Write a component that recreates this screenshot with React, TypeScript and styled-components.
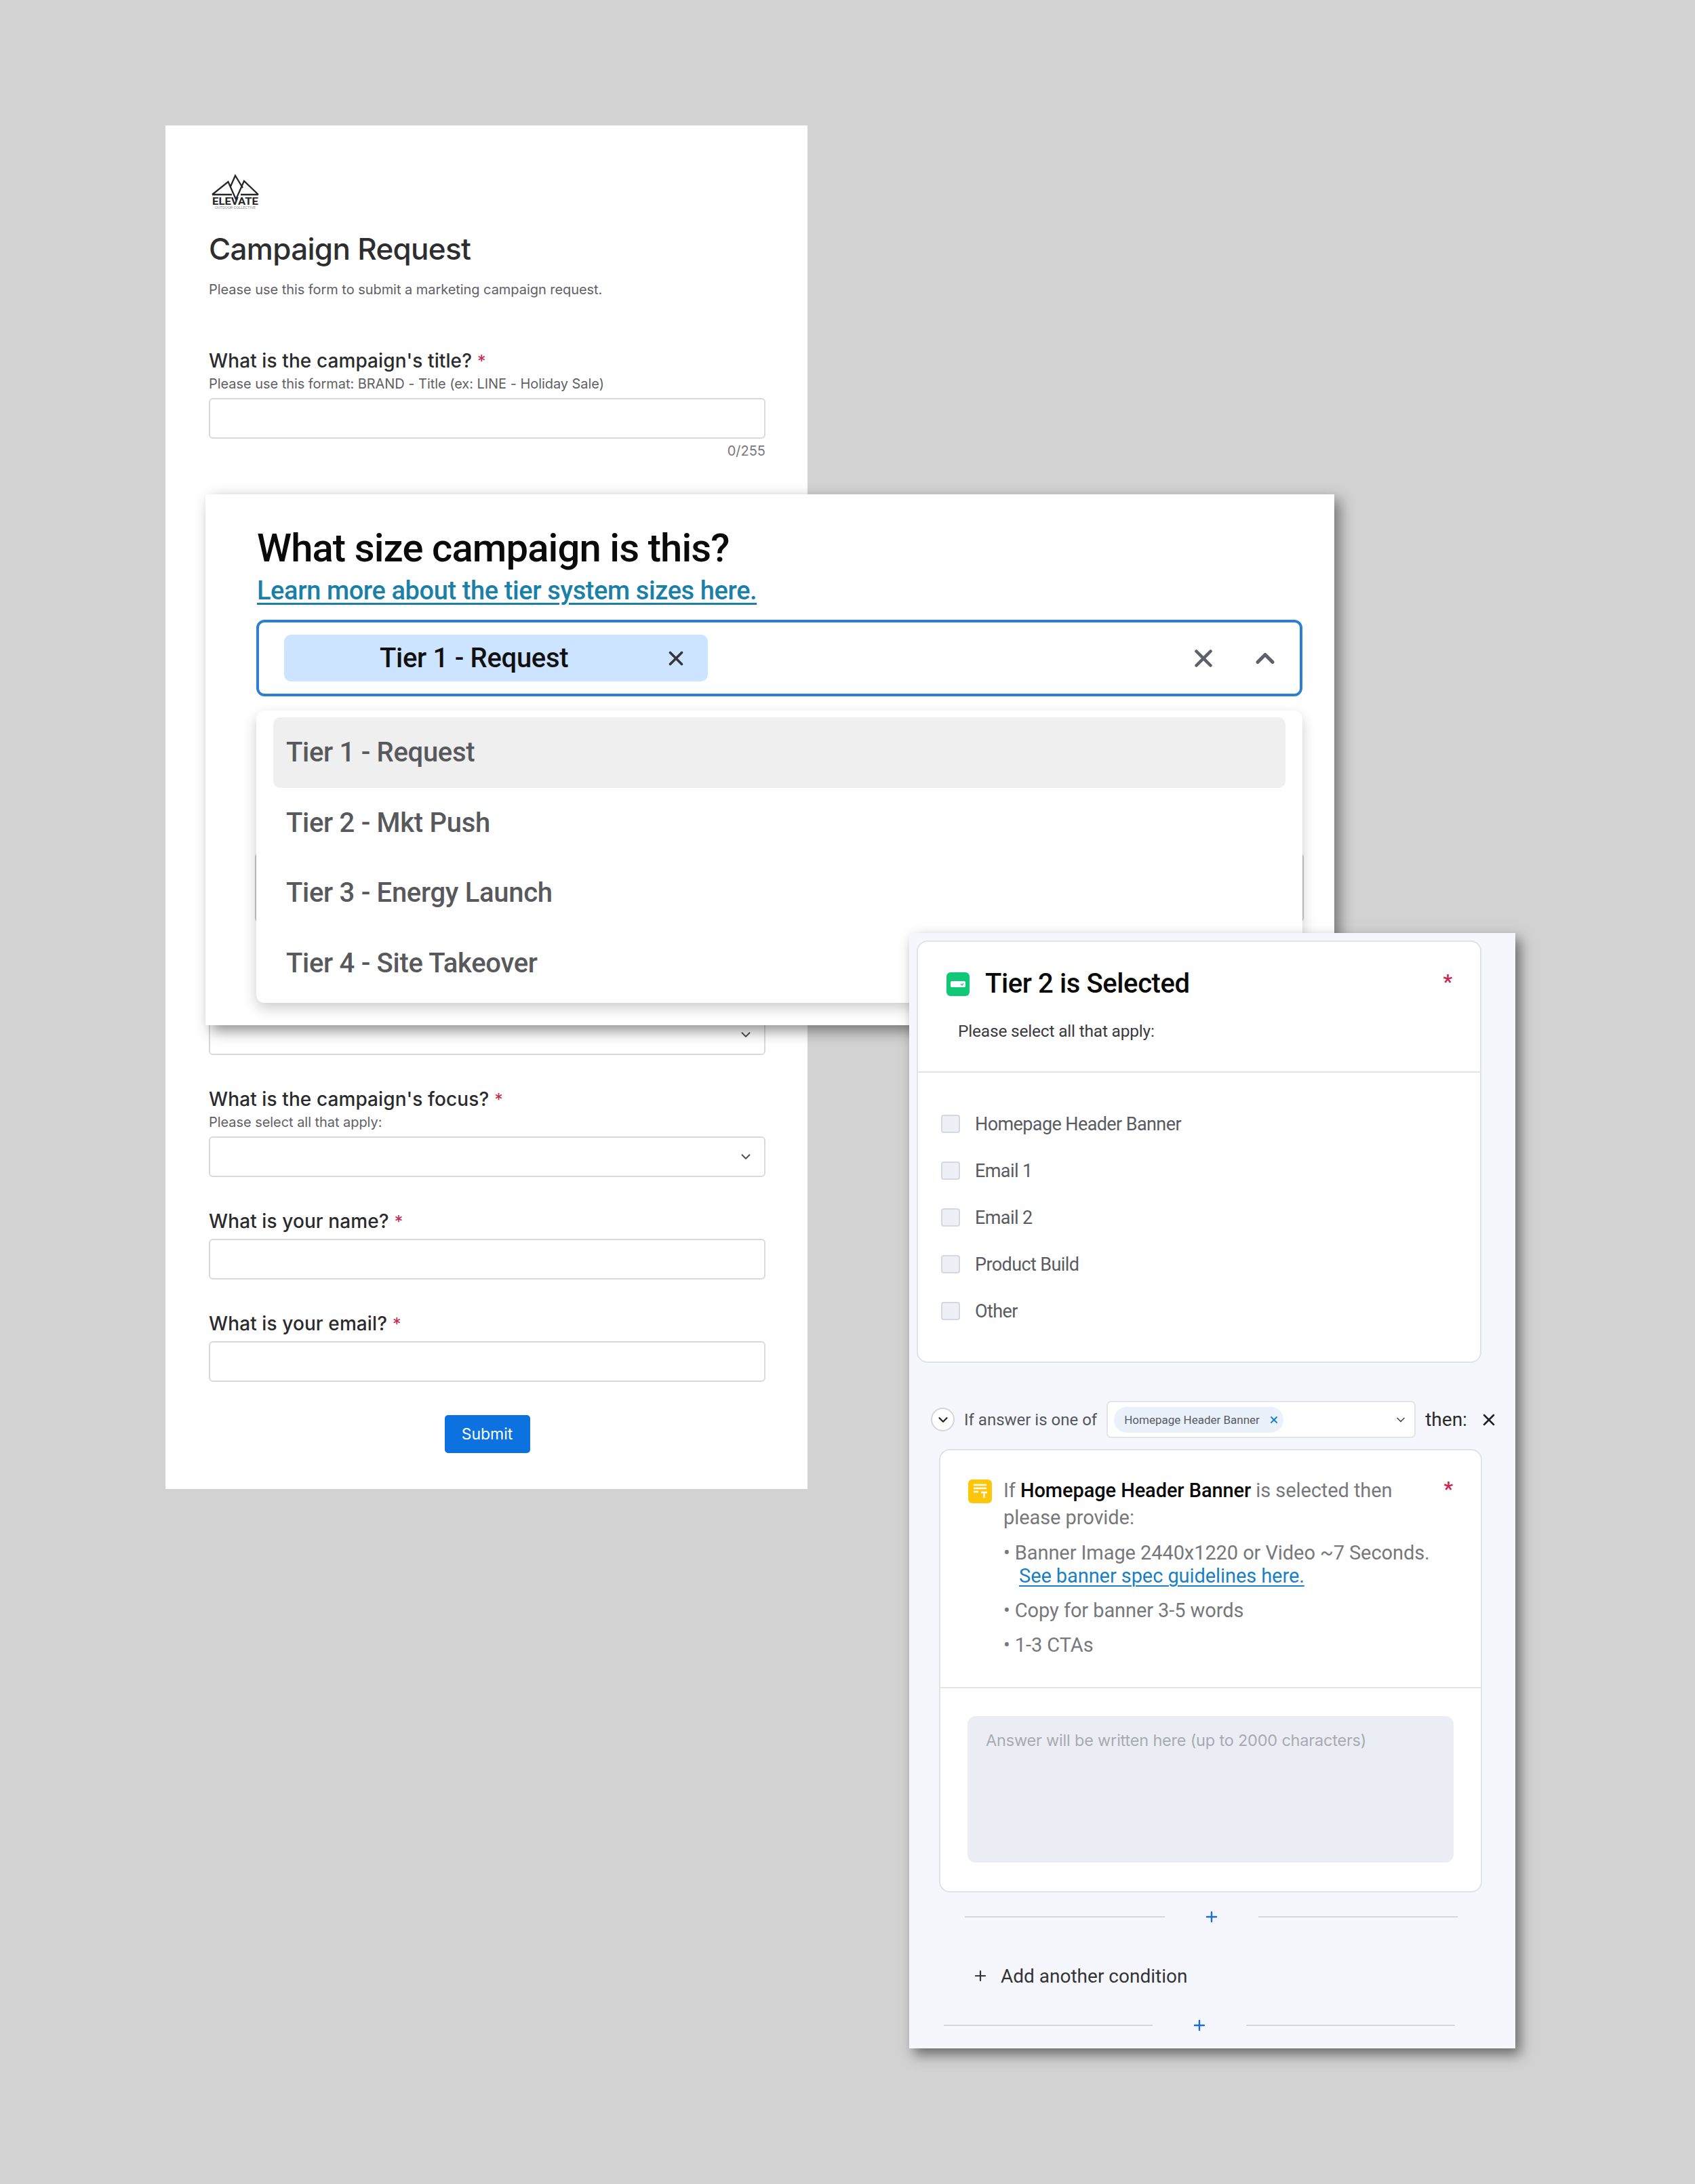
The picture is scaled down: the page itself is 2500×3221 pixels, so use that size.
import styled, { createGlobalStyle } from "styled-components";
import { X, ChevronDown, ChevronUp, Plus } from "lucide-react";

const GlobalStyle = createGlobalStyle`
  html, body {
    margin: 0;
    padding: 0;
    background: #d2d2d2;
  }
`;

const FORM_FONT = `"Inter", "Noto Sans", sans-serif`;
const DIN_FONT = `"Roboto", "Liberation Sans", sans-serif`;

const Page = styled.div`
  position: relative;
  box-sizing: border-box;
  width: 2500px;
  height: 3221px;
  padding: 185px 0 0 244px;
  background: #d2d2d2;
  overflow: hidden;
`;

/* the form at the back */
const FormSheet = styled.form`
  box-sizing: border-box;
  width: 947px;
  padding: 72px 62px 53px 64px;
  background: #fff;
  font-family: ${FORM_FONT};
`;

const LogoMark = styled.svg`
  display: block;
  width: 72px;
  height: 52px;
  margin-left: 3px;
`;

const FormTitle = styled.h1`
  margin: 33px 0 0;
  font-size: 44px;
  line-height: 50px;
  font-weight: 500;
  letter-spacing: -0.7px;
  color: #2e2e30;
`;

const FormIntro = styled.p`
  margin: 22px 0 0;
  font-size: 20px;
  line-height: 26px;
  letter-spacing: -0.05px;
  color: #5f6066;
`;

const Field = styled.div<{ $top: number }>`
  margin-top: ${({ $top }) => $top}px;
`;

const FieldLabel = styled.label`
  display: block;
  font-size: 28px;
  line-height: 34px;
  font-weight: 500;
  letter-spacing: 0.1px;
  color: #2b2b2e;
`;

const Required = styled.span`
  margin-left: 8px;
  font-size: 25px;
  font-weight: 400;
  color: #c8274f;
`;

const FieldHint = styled.div`
  margin-top: 4px;
  font-size: 20px;
  line-height: 24px;
  letter-spacing: -0.05px;
  color: #5f6066;
`;

const TextBox = styled.div<{ $top: number }>`
  box-sizing: border-box;
  height: 60px;
  margin-top: ${({ $top }) => $top}px;
  border: 2px solid #d9d9d9;
  border-radius: 6px;
  background: #fff;
`;

const SelectBox = styled(TextBox)`
  display: flex;
  align-items: center;
  justify-content: flex-end;
  padding-right: 16px;
  color: #4a4a50;
`;

const CharCount = styled.div`
  margin-top: 6px;
  font-size: 20px;
  line-height: 24px;
  text-align: right;
  color: #77787e;
`;

const SubmitRow = styled.div`
  display: flex;
  justify-content: center;
  margin-top: 49px;
`;

const SubmitButton = styled.button`
  width: 126px;
  height: 56px;
  border: 0;
  border-radius: 5px;
  background: #0b72e0;
  color: #fff;
  font-family: ${FORM_FONT};
  font-size: 23px;
`;

/* the tier question laid over the form */
const TierModal = styled.section`
  position: absolute;
  left: 303px;
  top: 729px;
  box-sizing: border-box;
  width: 1665px;
  height: 783px;
  padding: 47px 47px 0 75px;
  background: #fff;
  box-shadow: 8px 8px 20px rgba(0, 0, 0, 0.45);
  font-family: ${DIN_FONT};
`;

const ModalTitle = styled.h2`
  margin: 0 0 0 1px;
  font-size: 58px;
  line-height: 64px;
  font-weight: 500;
  letter-spacing: -0.9px;
  color: #0a0a0a;
`;

const ModalLink = styled.a`
  display: block;
  width: fit-content;
  margin: 9px 0 0 1px;
  font-size: 38px;
  line-height: 44px;
  font-weight: 500;
  letter-spacing: -0.4px;
  color: #1a80a8;
  text-decoration: underline;
  text-decoration-thickness: 3px;
  text-underline-offset: 5px;
`;

const TierSelect = styled.div`
  box-sizing: border-box;
  display: flex;
  align-items: center;
  height: 113px;
  margin-top: 21px;
  padding: 0 29px 0 37px;
  border: 4px solid #2f7fd0;
  border-radius: 12px;
`;

const TierChip = styled.div`
  display: flex;
  align-items: center;
  box-sizing: border-box;
  width: 625px;
  height: 69px;
  padding: 0 30px 0 141px;
  border-radius: 10px;
  background: #cce4ff;
  font-size: 40px;
  font-weight: 500;
  letter-spacing: -0.3px;
  color: #111;
`;

const ChipClose = styled(X)`
  margin-left: auto;
  color: #33363c;
`;

const SelectActions = styled.div`
  display: flex;
  align-items: center;
  gap: 48px;
  margin-left: auto;
  color: #5c6068;
`;

const CoveredField = styled.div`
  position: absolute;
  left: 73px;
  top: 529px;
  box-sizing: border-box;
  width: 1547px;
  height: 102px;
  border: 2px solid #c9c9c9;
  border-radius: 6px;
`;

const TierMenu = styled.ul`
  position: relative;
  box-sizing: border-box;
  height: 431px;
  margin: 21px 0 0;
  padding: 10px 25px 7px;
  list-style: none;
  border-radius: 12px;
  background: #fff;
  box-shadow: 0 8px 20px rgba(0, 0, 0, 0.2);
`;

const TierOption = styled.li<{ $active?: boolean }>`
  display: flex;
  align-items: center;
  height: 103.5px;
  padding-left: 19px;
  border-radius: 10px;
  font-size: 40px;
  font-weight: 500;
  letter-spacing: -0.3px;
  color: #58595c;
  background: ${({ $active }) => ($active ? "#efefef" : "transparent")};
`;

/* the conditional logic builder */
const LogicPanel = styled.section`
  position: absolute;
  left: 1341px;
  top: 1376px;
  box-sizing: border-box;
  width: 894px;
  height: 1645px;
  padding-top: 11px;
  background: #f5f7fc;
  box-shadow: 7px 9px 18px rgba(0, 0, 0, 0.5);
  font-family: ${DIN_FONT};
`;

const Card = styled.div`
  box-sizing: border-box;
  border: 2px solid #dfe2e9;
  border-radius: 16px;
  background: #fff;
`;

const OptionsCard = styled(Card)`
  width: 833px;
  height: 623px;
  margin-left: 11px;
`;

const OptionsHead = styled.div`
  box-sizing: border-box;
  height: 193px;
  padding: 44px 41px 0 42px;
  border-bottom: 2px solid #e2e4ea;
`;

const HeadRow = styled.div`
  display: flex;
  align-items: center;
  gap: 23px;
`;

const HeadTitle = styled.h3`
  margin: 0;
  font-size: 40px;
  line-height: 36px;
  font-weight: 500;
  letter-spacing: -0.4px;
  color: #0a0a0a;
`;

const Star = styled.span<{ $top: number }>`
  margin: ${({ $top }) => $top}px 0 0 auto;
  align-self: flex-start;
  font-size: 30px;
  line-height: 24px;
  font-weight: 700;
  color: #c8274f;
`;

const HeadHint = styled.p`
  margin: 38px 0 0 17px;
  font-size: 24.5px;
  line-height: 28px;
  letter-spacing: -0.2px;
  color: #3a3a3e;
`;

const OptionList = styled.div`
  padding: 41px 0 0 34px;
`;

const OptionRow = styled.div`
  display: flex;
  align-items: center;
  gap: 22px;
  height: 69px;
  font-size: 27px;
  letter-spacing: -0.6px;
  color: #5a5b62;
`;

const CheckSquare = styled.span`
  box-sizing: border-box;
  width: 28px;
  height: 27px;
  border: 2px solid #d6d8e0;
  border-radius: 4px;
  background: #eef0f7;
`;

const ConditionRow = styled.div`
  display: flex;
  align-items: center;
  gap: 14px;
  height: 55px;
  margin-top: 56px;
  padding-left: 32px;
  font-size: 24px;
  color: #55565c;
`;

const CircleToggle = styled.span`
  box-sizing: border-box;
  display: flex;
  align-items: center;
  justify-content: center;
  width: 35px;
  height: 35px;
  border: 2px solid #d4d5da;
  border-radius: 50%;
  background: #fff;
  color: #222;
`;

const AnswerSelect = styled.div`
  box-sizing: border-box;
  display: flex;
  align-items: center;
  width: 456px;
  height: 55px;
  padding: 0 10px 0 9px;
  border: 2px solid #e2e4ea;
  border-radius: 7px;
  background: #fff;
  color: #44454b;
`;

const AnswerChip = styled.span`
  box-sizing: border-box;
  display: flex;
  align-items: center;
  gap: 13px;
  width: 250px;
  height: 38px;
  padding-left: 15px;
  border-radius: 19px;
  background: #eaf1fb;
  font-size: 17px;
  color: #5a5b62;
`;

const AnswerChevron = styled(ChevronDown)`
  margin-left: auto;
`;

const ThenText = styled.span`
  font-size: 28px;
  color: #2b2b2e;
`;

const RowClose = styled(X)`
  margin-left: 4px;
  color: #222;
`;

const FollowUpCard = styled(Card)`
  width: 801px;
  height: 654px;
  margin: 16px 0 0 44px;
`;

const FollowUpHead = styled.div`
  box-sizing: border-box;
  display: flex;
  gap: 17px;
  height: 351px;
  padding: 39px 41px 0 41px;
  border-bottom: 2px solid #e2e4ea;
`;

const NoteIcon = styled.svg`
  flex: none;
  width: 35px;
  height: 35px;
  margin-top: 4px;
`;

const FollowUpBody = styled.div`
  flex: 1;
  font-size: 29px;
  letter-spacing: -0.08px;
  color: #77787c;
`;

const Lead = styled.p`
  margin: 0;
  line-height: 40px;
  b {
    font-weight: 500;
    color: #0a0a0a;
  }
`;

const Bullet = styled.p<{ $top: number }>`
  margin: ${({ $top }) => $top}px 0 0;
  line-height: 34px;
`;

const SpecLink = styled.a`
  display: inline-block;
  margin-left: 23px;
  color: #1a7fc4;
  text-decoration: underline;
  text-decoration-thickness: 2px;
  text-underline-offset: 4px;
`;

const AnswerArea = styled.div`
  box-sizing: border-box;
  width: 717px;
  height: 216px;
  margin: 41px 0 0 40px;
  padding: 21px 27px;
  border-radius: 12px;
  background: #ebedf5;
  font-family: ${FORM_FONT};
  font-size: 23.5px;
  line-height: 30px;
  letter-spacing: -0.2px;
  color: #a8aab0;
`;

const PlusDivider = styled.div<{ $top: number; $left: number; $right: number }>`
  display: flex;
  align-items: center;
  height: 30px;
  margin-top: ${({ $top }) => $top}px;
  padding: 0 ${({ $right }) => $right}px 0 ${({ $left }) => $left}px;
  color: #1a6fd0;
`;

const DividerLine = styled.span`
  flex: 1;
  height: 2px;
  background: #d4d6dc;
`;

const PlusSlot = styled.span`
  display: flex;
  justify-content: center;
  width: 138px;
`;

const AddCondition = styled.div`
  display: flex;
  align-items: center;
  gap: 18px;
  height: 34px;
  margin-top: 55px;
  padding-left: 93px;
  font-size: 28px;
  color: #333438;
`;

const ElevateLogo = () => (
  <LogoMark viewBox="0 0 72 52">
    <path
      d="M2 30 L25.5 11 L37 37 L49 10 L70 30 M2 30 H31 M44 30 H70 M29 18 L36 2 L47 20"
      fill="none"
      stroke="#26262a"
      strokeWidth="2.3"
    />
    <text x="2" y="44.5" fontFamily="Roboto, sans-serif" fontWeight="700" fontSize="15" fill="#26262a" textLength="68" lengthAdjust="spacingAndGlyphs">
      ELEVATE
    </text>
    <text x="6" y="51" fontFamily="Roboto, sans-serif" fontSize="5" fill="#8a8b90" textLength="60" lengthAdjust="spacingAndGlyphs">
      OUTDOOR COLLECTIVE
    </text>
  </LogoMark>
);

const GreenIcon = () => (
  <svg width="34" height="35" viewBox="0 0 34 35">
    <rect width="34" height="35" rx="6" fill="#10c878" />
    <rect x="6" y="13" width="22" height="9" rx="2" fill="#fff" />
    <path d="M21 17 L23 19 L25 16" stroke="#10c878" strokeWidth="1.2" fill="none" />
  </svg>
);

const YellowIcon = () => (
  <NoteIcon viewBox="0 0 35 35">
    <rect width="35" height="35" rx="6" fill="#fdc60a" />
    <path d="M8 8 H27 M8 13 H27 M8 18 H15 M19 19 H28 M23.5 19 V27" stroke="#fff" strokeWidth="2.4" fill="none" />
  </NoteIcon>
);

const tiers = ["Tier 1 - Request", "Tier 2 - Mkt Push", "Tier 3 - Energy Launch", "Tier 4 - Site Takeover"];
const placements = ["Homepage Header Banner", "Email 1", "Email 2", "Product Build", "Other"];

const App = () => {
  return (
    <Page>
      <GlobalStyle />
      <FormSheet>
        <ElevateLogo />
        <FormTitle>Campaign Request</FormTitle>
        <FormIntro>Please use this form to submit a marketing campaign request.</FormIntro>

        <Field $top={75}>
          <FieldLabel>
            What is the campaign's title?<Required>*</Required>
          </FieldLabel>
          <FieldHint>Please use this format: BRAND - Title (ex: LINE - Holiday Sale)</FieldHint>
          <TextBox $top={9} />
          <CharCount>0/255</CharCount>
        </Field>

        <SelectBox $top={819}>
          <ChevronDown size={22} />
        </SelectBox>

        <Field $top={48}>
          <FieldLabel>
            What is the campaign's focus?<Required>*</Required>
          </FieldLabel>
          <FieldHint>Please select all that apply:</FieldHint>
          <SelectBox $top={9}>
            <ChevronDown size={22} />
          </SelectBox>
        </Field>

        <Field $top={48}>
          <FieldLabel>
            What is your name?<Required>*</Required>
          </FieldLabel>
          <TextBox $top={8} />
        </Field>

        <Field $top={48}>
          <FieldLabel>
            What is your email?<Required>*</Required>
          </FieldLabel>
          <TextBox $top={8} />
        </Field>

        <SubmitRow>
          <SubmitButton type="button">Submit</SubmitButton>
        </SubmitRow>
      </FormSheet>

      <TierModal>
        <ModalTitle>What size campaign is this?</ModalTitle>
        <ModalLink>Learn more about the tier system sizes here.</ModalLink>
        <TierSelect>
          <TierChip>
            Tier 1 - Request
            <ChipClose size={34} strokeWidth={2.6} />
          </TierChip>
          <SelectActions>
            <X size={42} strokeWidth={2.6} />
            <ChevronUp size={44} strokeWidth={2.8} />
          </SelectActions>
        </TierSelect>
        <CoveredField />
        <TierMenu>
          {tiers.map((tier, i) => (
            <TierOption key={tier} $active={i === 0}>
              {tier}
            </TierOption>
          ))}
        </TierMenu>
      </TierModal>

      <LogicPanel>
        <OptionsCard>
          <OptionsHead>
            <HeadRow>
              <GreenIcon />
              <HeadTitle>Tier 2 is Selected</HeadTitle>
              <Star $top={3}>*</Star>
            </HeadRow>
            <HeadHint>Please select all that apply:</HeadHint>
          </OptionsHead>
          <OptionList>
            {placements.map((name) => (
              <OptionRow key={name}>
                <CheckSquare />
                {name}
              </OptionRow>
            ))}
          </OptionList>
        </OptionsCard>

        <ConditionRow>
          <CircleToggle>
            <ChevronDown size={22} strokeWidth={2.4} />
          </CircleToggle>
          If answer is one of
          <AnswerSelect>
            <AnswerChip>
              Homepage Header Banner
              <X size={16} strokeWidth={3} color="#1a7fd0" />
            </AnswerChip>
            <AnswerChevron size={20} />
          </AnswerSelect>
          <ThenText>then:</ThenText>
          <RowClose size={28} strokeWidth={2.2} />
        </ConditionRow>

        <FollowUpCard>
          <FollowUpHead>
            <YellowIcon />
            <FollowUpBody>
              <Lead>
                If <b>Homepage Header Banner</b> is selected then
                <br />
                please provide:
              </Lead>
              <Bullet $top={15}>
                • Banner Image 2440x1220 or Video ~7 Seconds.
                <br />
                <SpecLink>See banner spec guidelines here.</SpecLink>
              </Bullet>
              <Bullet $top={17}>• Copy for banner 3-5 words</Bullet>
              <Bullet $top={17}>• 1-3 CTAs</Bullet>
            </FollowUpBody>
            <Star $top={6}>*</Star>
          </FollowUpHead>
          <AnswerArea>Answer will be written here (up to 2000 characters)</AnswerArea>
        </FollowUpCard>

        <PlusDivider $top={21} $left={82} $right={85}>
          <DividerLine />
          <PlusSlot>
            <Plus size={24} strokeWidth={2.4} />
          </PlusSlot>
          <DividerLine />
        </PlusDivider>

        <AddCondition>
          <Plus size={24} strokeWidth={2.2} />
          Add another condition
        </AddCondition>

        <PlusDivider $top={41} $left={51} $right={89}>
          <DividerLine />
          <PlusSlot>
            <Plus size={24} strokeWidth={2.4} />
          </PlusSlot>
          <DividerLine />
        </PlusDivider>
      </LogicPanel>
    </Page>
  );
};

export default App;
